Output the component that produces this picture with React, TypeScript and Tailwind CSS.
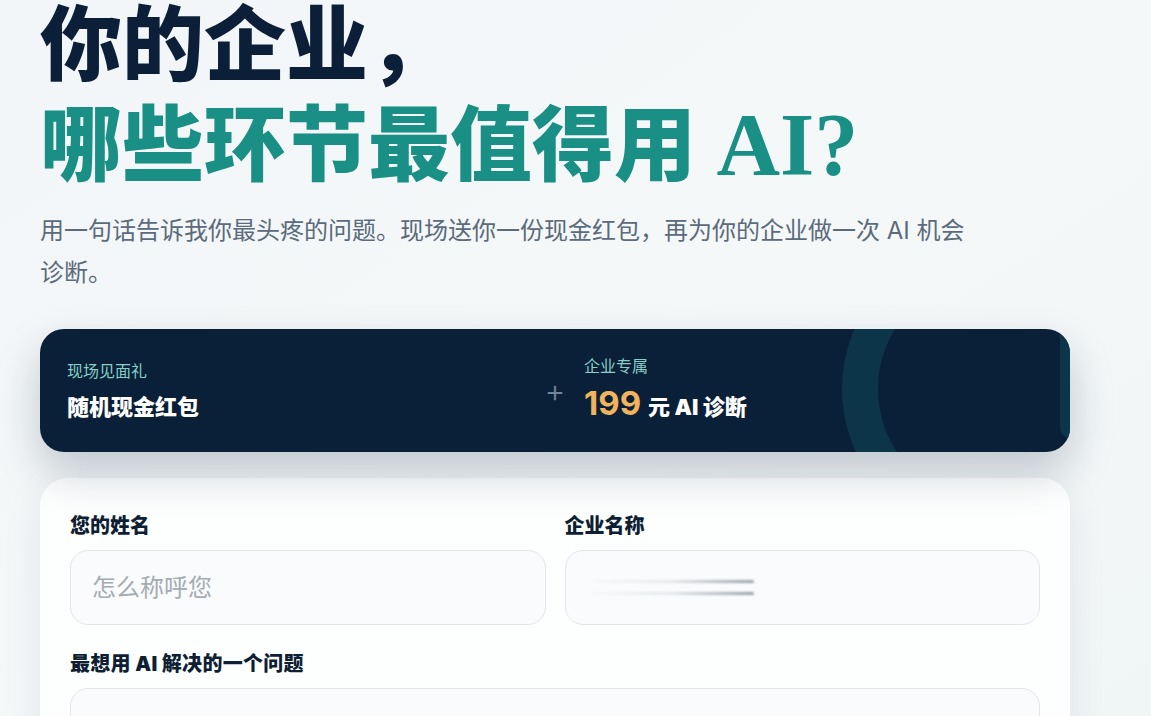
import React from "react";

export default function App() {
  return (
    <div className="min-h-[716px] w-full overflow-hidden bg-gradient-to-br from-[#f3f6f8] via-[#f5f8f9] to-[#f0f5f6]">
      <div className="w-[1030px] ml-[40px]">
        <h1
          className="mt-[-2px] text-[82px] leading-[98px] font-black tracking-[0px]"
          style={{ fontFamily: "'Liberation Serif', 'Noto Sans CJK SC', serif" }}
        >
          <span className="block text-[#0c1f38]">你的企业，</span>
          <span className="block text-[#1a8f86]">
            哪些环节最值得用 <span className="text-[88px]">AI?</span>
          </span>
        </h1>
        <p
          className="mt-[14px] w-[940px] text-[24px] leading-[42px] text-[#5b6b7b]"
          style={{ fontFamily: "Inter, 'Noto Sans CJK SC', sans-serif" }}
        >
          用一句话告诉我你最头疼的问题。现场送你一份现金红包，再为你的企业做一次 AI 机会诊断。
        </p>

        <div
          className="relative mt-[35px] h-[123px] overflow-hidden rounded-[24px] bg-[#0a1f38] shadow-[0_20px_44px_rgba(10,31,56,0.22)]"
          style={{ fontFamily: "Inter, 'Noto Sans CJK SC', sans-serif" }}
        >
          <div className="absolute left-[802px] top-[-90px] h-[300px] w-[300px] rounded-full border-[36px] border-[#0d3549]" />
          <div className="absolute right-[-14px] top-[-20px] h-[130px] w-[24px] rounded-full bg-[#0d3549]" />
          <div className="relative grid h-full grid-cols-[1fr_18px_1fr] items-center gap-[20px] px-[27px]">
            <div className="flex flex-col">
              <span className="text-[16px] leading-[22px] text-[#86cfc6]">现场见面礼</span>
              <span className="mt-[11px] text-[22px] font-black leading-[28px] text-white">随机现金红包</span>
            </div>
            <div className="flex items-center justify-center text-[32px] font-light leading-none text-[#718497]">+</div>
            <div className="flex flex-col">
              <span className="text-[16px] leading-[22px] text-[#86cfc6]">企业专属</span>
              <span className="mt-[6px] flex items-baseline leading-[40px] text-white">
                <span className="text-[33px] font-bold text-[#f1b45c]">199</span>
                <span className="ml-[7px] text-[22px] font-black">元 AI 诊断</span>
              </span>
            </div>
          </div>
        </div>

        <div
          className="mt-[26px] h-[300px] rounded-[28px] bg-[#fdfefe] px-[30px] pt-[35px] shadow-[0_10px_40px_rgba(10,31,56,0.08)]"
          style={{ fontFamily: "Inter, 'Noto Sans CJK SC', sans-serif" }}
        >
          <div className="grid grid-cols-2 gap-x-[19px]">
            <div className="flex flex-col">
              <label className="text-[20px] font-black leading-[26px] text-[#0f1f33]">您的姓名</label>
              <div className="mt-[11px] flex h-[75px] items-center rounded-[18px] border border-[#e3e7ea] bg-[#f9fbfc] px-[21px]">
                <span className="text-[24px] text-[#a3abb3]">怎么称呼您</span>
              </div>
            </div>
            <div className="flex flex-col">
              <label className="text-[20px] font-black leading-[26px] text-[#0f1f33]">企业名称</label>
              <div className="mt-[11px] flex h-[75px] flex-col justify-center gap-[9px] rounded-[18px] border border-[#e3e7ea] bg-[#f9fbfc] px-[20px]">
                <div className="h-[3px] w-[168px] rounded-full bg-gradient-to-r from-transparent via-[#e6e9ec] to-[#9aa1a8] blur-[1px]" />
                <div className="h-[3px] w-[168px] rounded-full bg-gradient-to-r from-transparent via-[#e6e9ec] to-[#9aa1a8] blur-[1px]" />
              </div>
            </div>
          </div>
          <div className="mt-[26px] flex flex-col">
            <label className="text-[20px] font-black leading-[26px] tracking-[0.3px] text-[#0f1f33]">最想用 AI 解决的一个问题</label>
            <div className="mt-[11px] h-[120px] rounded-[18px] border border-[#e3e7ea] bg-[#f9fbfc]" />
          </div>
        </div>
      </div>
    </div>
  );
}
